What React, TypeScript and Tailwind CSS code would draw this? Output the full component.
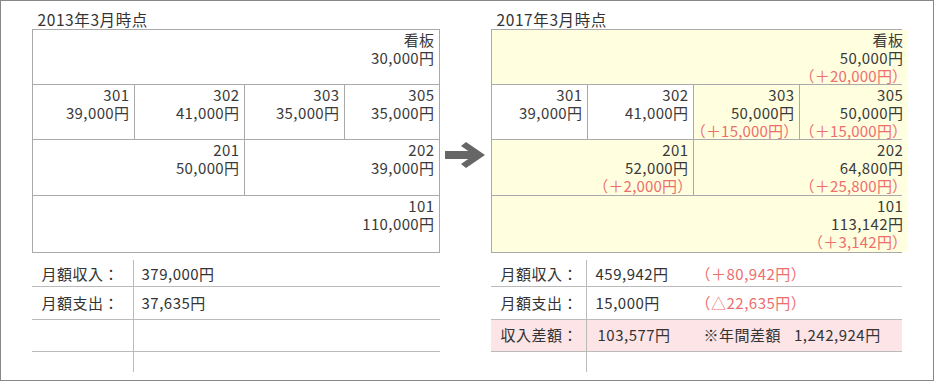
import React from "react";

const font = { fontFamily: '"Noto Sans CJK JP", "Noto Sans", sans-serif' };

function Cell({ lines, red, bg, className = "" }: { lines: string[]; red?: string; bg?: boolean; className?: string }) {
  return (
    <div className={`flex flex-col items-end pr-[4px] pt-[1px] text-[15px] leading-[18px] tracking-[0.4px] text-[#3a3a3a] whitespace-nowrap ${bg ? "bg-[#ffffe0]" : "bg-white"} ${className}`}>
      {lines.map((l, i) => (
        <div key={i} className="h-[18px]">{l}</div>
      ))}
      {red && <div className="h-[17px] leading-[17px] text-[#ee6e6e] -mr-[4px] tracking-[0.2px]">{red}</div>}
    </div>
  );
}

function Arrow() {
  return (
    <svg width="40" height="26" viewBox="0 0 40 26" className="mt-[141px]">
      <rect x="0" y="9" width="31" height="8" fill="#666" />
      <path d="M21 0 L40 13 L21 26 L16 22 L29 13 L16 4 Z" fill="#666" />
    </svg>
  );
}

export default function App() {
  return (
    <div style={font} className="w-[935px] h-[382px] bg-white">
      <div className="w-[934px] h-[381px] border-[1.5px] border-[#888] flex">
        {/* Left panel */}
        <div className="ml-[30.5px] w-[408px] pt-[9px]">
          <div className="pl-[6px] text-[15.5px] leading-[18px] text-[#333] tracking-[0.6px]">2013年3月時点</div>
          <div className="mt-[1px] border border-[#aaa] bg-[#aaa] grid gap-[1px] grid-cols-[101px_109px_99px_1fr] grid-rows-[54px_54px_55px_56px]">
            <Cell className="col-span-4" lines={["看板", "30,000円"]} />
            <Cell lines={["301", "39,000円"]} />
            <Cell lines={["302", "41,000円"]} />
            <Cell lines={["303", "35,000円"]} />
            <Cell lines={["305", "35,000円"]} />
            <Cell className="col-span-2" lines={["201", "50,000円"]} />
            <Cell className="col-span-2" lines={["202", "39,000円"]} />
            <Cell className="col-span-4" lines={["101", "110,000円"]} />
          </div>
          <div className="mt-[7px] text-[15px] text-[#333] tracking-[0.5px]">
            <div className="flex h-[27px] border-b-[1.5px] border-[#bbb]">
              <div className="w-[102px] border-r-[1.5px] border-[#bbb] pl-[10px] flex items-center pt-[2px]">月額収入：</div>
              <div className="pl-[8px] flex items-center pt-[2px]">379,000円</div>
            </div>
            <div className="flex h-[33px] border-b-[1.5px] border-[#bbb]">
              <div className="w-[102px] border-r-[1.5px] border-[#bbb] pl-[10px] flex items-center">月額支出：</div>
              <div className="pl-[8px] flex items-center">37,635円</div>
            </div>
            <div className="flex h-[32px] border-b-[1.5px] border-[#bbb]">
              <div className="w-[102px] border-r-[1.5px] border-[#bbb]" />
            </div>
            <div className="flex h-[20px]">
              <div className="w-[102px] border-r-[1.5px] border-[#bbb]" />
            </div>
          </div>
        </div>

        {/* Arrow */}
        <div className="ml-[5px] w-[46px]">
          <Arrow />
        </div>

        {/* Right panel */}
        <div className="w-[411px] pt-[9px]">
          <div className="pl-[6px] text-[15.5px] leading-[18px] text-[#333] tracking-[0.6px]">2017年3月時点</div>
          <div className="mt-[1px] border border-[#aaa] bg-[#aaa] grid gap-[1px] grid-cols-[95px_105px_105px_1fr] grid-rows-[54px_54px_55px_56px]">
            <Cell bg className="col-span-4" lines={["看板", "50,000円"]} red="（＋20,000円）" />
            <Cell lines={["301", "39,000円"]} />
            <Cell lines={["302", "41,000円"]} />
            <Cell bg lines={["303", "50,000円"]} red="（＋15,000円）" />
            <Cell bg lines={["305", "50,000円"]} red="（＋15,000円）" />
            <Cell bg className="col-span-2" lines={["201", "52,000円"]} red="（＋2,000円）" />
            <Cell bg className="col-span-2" lines={["202", "64,800円"]} red="（＋25,800円）" />
            <Cell bg className="col-span-4" lines={["101", "113,142円"]} red="（＋3,142円）" />
          </div>
          <div className="mt-[7px] text-[15px] text-[#333] tracking-[0.5px]">
            <div className="flex h-[27px] border-b-[1.5px] border-[#bbb]">
              <div className="w-[96px] border-r-[1.5px] border-[#bbb] pl-[10px] flex items-center pt-[2px]">月額収入：</div>
              <div className="pl-[9px] w-[109px] flex items-center pt-[2px]">459,942円</div>
              <div className="flex items-center pt-[2px] text-[#ee6e6e]">（＋80,942円）</div>
            </div>
            <div className="flex h-[33px] border-b-[1.5px] border-[#bbb]">
              <div className="w-[96px] border-r-[1.5px] border-[#bbb] pl-[10px] flex items-center">月額支出：</div>
              <div className="pl-[9px] w-[109px] flex items-center">15,000円</div>
              <div className="flex items-center text-[#ee6e6e]">（△22,635円）</div>
            </div>
            <div className="flex h-[32px] border-b-[1.5px] border-[#bbb] bg-[#fde4e6]">
              <div className="w-[96px] border-r-[1.5px] border-[#bbb] pl-[10px] flex items-center">収入差額：</div>
              <div className="pl-[11px] w-[117px] flex items-center">103,577円</div>
              <div className="flex items-center">※年間差額</div>
              <div className="pl-[13px] flex items-center">1,242,924円</div>
            </div>
            <div className="flex h-[20px]">
              <div className="w-[96px] border-r-[1.5px] border-[#bbb]" />
            </div>
          </div>
        </div>
      </div>
    </div>
  );
}
